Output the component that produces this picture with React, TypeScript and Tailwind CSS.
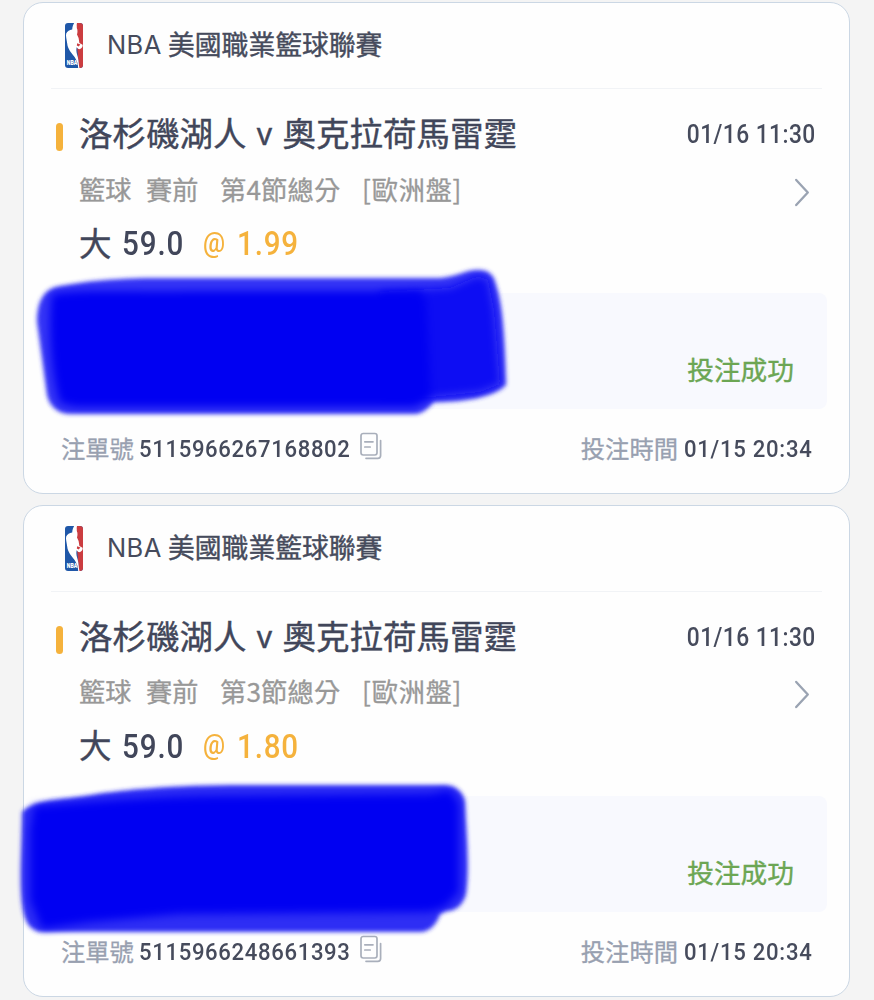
import type { ReactNode } from "react"

interface Bet {
  id: string
  period: string
  odds: string
  placedAt: string
  cover: ReactNode
}

// Condensed figures, close to a DIN face
const num = "inline-block font-['Roboto','Noto_Sans_CJK_TC',sans-serif] font-medium whitespace-nowrap scale-x-[0.91]"

function LeagueLogo() {
  return (
    <svg viewBox="0 0 18 45" className="h-[45px] w-[18px]">
      <defs>
        <clipPath id="logo-shape">
          <rect width="18" height="45" rx="3" />
        </clipPath>
      </defs>
      <g clipPath="url(#logo-shape)">
        <rect width="18" height="45" fill="#1f57a8" />
        <path d="M10 0H18V45H14Z" fill="#cb3c40" />
        <path
          d="M9.2 0H12C11.4 2 12 3.5 11.8 5C12.8 7 12.6 9.5 12 11.5L13.6 15L14.4 20L17.6 21.8C18 24.5 15.5 26.8 13.4 26L11.6 24.2C10.8 28 12 31 12.8 34C13.6 38 13.8 41 14.4 45H13.2C13 41 12 37.5 9.6 34C6.5 30 2.8 26.5 2.2 20.5C1.7 16 0.5 13 1.2 10.5C2.3 8 4.5 6.8 7.2 6.4C7.4 3.5 8.2 1.6 9.2 0Z"
          fill="#fff"
        />
        <path d="M12.2 20.2L15.4 21.4L13.6 23.4L11.8 22.6Z" fill="#cb3c40" />
        <text
          x="1.8"
          y="42.3"
          fontSize="7.4"
          fontWeight="900"
          textLength="10.5"
          lengthAdjust="spacingAndGlyphs"
          fill="#fff"
          fontFamily="Roboto, sans-serif"
        >
          NBA
        </text>
      </g>
    </svg>
  )
}

function CopyIcon() {
  return (
    <svg
      viewBox="0 0 22 28"
      className="mb-[6px] ml-[11px] h-[28px] w-[22px]"
      fill="none"
      stroke="#a9afbb"
      strokeWidth="1.7"
      strokeLinecap="round"
      strokeLinejoin="round"
    >
      <rect x="1" y="1.5" width="16" height="21.5" rx="2.2" />
      <path d="M4.8 9.8H13M4.8 15H10.2M20.6 8.5V23.5Q20.6 26.3 17.8 26.3H6" />
    </svg>
  )
}

// Marker strokes over the stake and payout amounts
function FirstCover() {
  return (
    <svg
      viewBox="24 260 496 170"
      className="pointer-events-none absolute top-[257px] left-0 h-[170px] w-[496px]"
    >
      <defs>
        <filter id="edge-a" x="-10%" y="-20%" width="120%" height="140%">
          <feGaussianBlur stdDeviation="2.2" />
        </filter>
        <filter id="core-a" x="-10%" y="-20%" width="120%" height="140%">
          <feGaussianBlur stdDeviation="4.5" />
        </filter>
      </defs>
      <path
        filter="url(#edge-a)"
        fill="#3434f5"
        d="M37 322C37 302 43 291 56 287C80 282 105 279 145 278H440C456 277 465 270 478 270C490 270 494 276 496 285C503 305 505 342 506 385C492 398 462 402 434 402C429 407 423 414 415 414H68C56 413 49 404 47 395Z"
      />
      <path
        filter="url(#core-a)"
        fill="#0d0df3"
        d="M380 292L450 288L478 276L488 280L494 310L500 384L480 392L432 397L380 398Z"
      />
      <path
        filter="url(#core-a)"
        fill="#0000f2"
        d="M52 294C80 289 130 292 190 291H420L426 300L431 397L415 407H75L60 403C50 370 48 320 52 294Z"
      />
    </svg>
  )
}

function SecondCover() {
  return (
    <svg
      viewBox="10 775 470 170"
      className="pointer-events-none absolute top-[269px] -left-[14px] h-[170px] w-[470px]"
    >
      <defs>
        <filter id="edge-b" x="-10%" y="-20%" width="120%" height="140%">
          <feGaussianBlur stdDeviation="2" />
        </filter>
        <filter id="core-b" x="-10%" y="-20%" width="120%" height="140%">
          <feGaussianBlur stdDeviation="4.5" />
        </filter>
      </defs>
      <path
        filter="url(#edge-b)"
        fill="#2f2ff4"
        d="M22 812C32 800 60 800 85 796C120 790 160 786 230 785H445C458 786 463 793 465 801C466 830 470 865 466 894C463 905 456 911 446 911L440 914C437 924 430 932 420 932H42C28 931 24 919 22 904C19 880 22 842 22 812Z"
      />
      <path
        filter="url(#core-b)"
        fill="#0000f2"
        d="M34 806C90 802 130 798 200 796L430 794L450 790L459 803V892L445 907L430 912L180 914L90 922L42 929L30 900V830Z"
      />
    </svg>
  )
}

const bets: Bet[] = [
  {
    id: "5115966267168802",
    period: "第4節總分",
    odds: "1.99",
    placedAt: "01/15 20:34",
    cover: <FirstCover />,
  },
  {
    id: "5115966248661393",
    period: "第3節總分",
    odds: "1.80",
    placedAt: "01/15 20:34",
    cover: <SecondCover />,
  },
]

function BetCard({ bet }: { bet: Bet }) {
  return (
    <article className="relative h-[492px] rounded-[20px] border border-[#cbd7e4] bg-[#fefefe]">
      <header className="mx-[27px] flex h-[86px] items-center border-b border-[#f1f3f6] pl-[14px]">
        <LeagueLogo />
        <h2 className="mb-[3px] ml-[24px] flex items-center text-[26.8px] leading-[40px] text-[#464b5c]">
          <span className="mt-[2px] mr-[7px] w-[54px] font-['Inter'] text-[25.5px] tracking-[0.4px]">NBA</span>
          <span className="[-webkit-text-stroke:0.4px_#464b5c]">美國職業籃球聯賽</span>
        </h2>
      </header>

      {/* Match */}
      <div className="mt-[20px] flex h-[54px] items-center pr-[33px] pl-[32px]">
        <span className="mt-[2px] h-[28px] w-[7px] rounded-full bg-[#f5b23c]" />
        <h3 className="mb-[6px] ml-[16px] flex text-[33.5px] leading-[50px] text-[#41465a] [-webkit-text-stroke:0.4px_#41465a]">
          <span>洛杉磯湖人</span>
          <span className="mt-[2px] w-[36px] text-center font-['Inter'] text-[30px]">v</span>
          <span>奧克拉荷馬雷霆</span>
        </h3>
        <time className={`${num} mb-[2px] ml-auto origin-right text-[25px] tracking-[0.5px] text-[#464b5c]`}>
          01/16 11:30
        </time>
      </div>

      {/* Market */}
      <div className="flex h-[54px] items-center pr-[39px] pl-[55px] text-[26.2px] leading-[40px] text-[#989898]">
        <div className="mb-[3px] flex [-webkit-text-stroke:0.3px_#989898]">
          <span className="w-[67px]">籃球</span>
          <span className="w-[74px]">賽前</span>
          <span className="w-[142px] tracking-[0.2px]">{bet.period}</span>
          <span className="tracking-[0.8px]">[歐洲盤]</span>
        </div>
        <svg
          viewBox="0 0 16 30"
          className="mt-[4px] ml-auto h-[29px] w-[16px]"
          fill="none"
          stroke="#9aa3b2"
          strokeWidth="2.4"
          strokeLinecap="round"
          strokeLinejoin="round"
        >
          <path d="M2 2L14 15L2 28" />
        </svg>
      </div>

      {/* Pick */}
      <div className="flex h-[54px] items-center pl-[55px] text-[32.5px] leading-[48px] text-[#41465a]">
        <span className="mb-[5px] w-[43px] [-webkit-text-stroke:0.4px_#41465a]">大</span>
        <span className={`${num} w-[81px] origin-left tracking-[1px]`}>59.0</span>
        <span className={`${num} mb-[3px] w-[34px] origin-left text-[27px] text-[#f5b23c]`}>@</span>
        <span className={`${num} origin-left tracking-[0.9px] text-[#f5b23c]`}>{bet.odds}</span>
      </div>

      <div className="mx-[22px] mt-[22px] flex h-[116px] items-end justify-end rounded-[8px] bg-[#f8f9fe] pr-[33px] pb-[20px]">
        <span className="text-[26.7px] leading-[40px] text-[#6ca653] [-webkit-text-stroke:0.4px_#6ca653]">
          投注成功
        </span>
      </div>

      <footer className="mt-[19px] flex h-[42px] items-center pr-[35px] pl-[37px] text-[24.3px] leading-[40px] whitespace-nowrap text-[#98a0b0]">
        <span className="mb-[2px] [-webkit-text-stroke:0.3px_#98a0b0]">注單號</span>
        <span className={`${num} ml-[5px] w-[210px] origin-left tracking-[0.72px] text-[#464b5c]`}>{bet.id}</span>
        <CopyIcon />
        <span className="mb-[2px] ml-auto [-webkit-text-stroke:0.3px_#98a0b0]">投注時間</span>
        <time className={`${num} ml-[6px] w-[130px] origin-left tracking-[0.8px] text-[#464b5c]`}>
          {bet.placedAt}
        </time>
      </footer>

      {bet.cover}
    </article>
  )
}

export default function App() {
  return (
    <main
      lang="zh-Hant"
      className="flex h-[1000px] w-[874px] flex-col gap-[10.5px] overflow-hidden bg-[#f4f4f4] pt-[2px] pr-[24px] pl-[23px] font-['Noto_Sans_CJK_TC',sans-serif]"
    >
      {bets.map((bet) => (
        <BetCard key={bet.id} bet={bet} />
      ))}
    </main>
  )
}
